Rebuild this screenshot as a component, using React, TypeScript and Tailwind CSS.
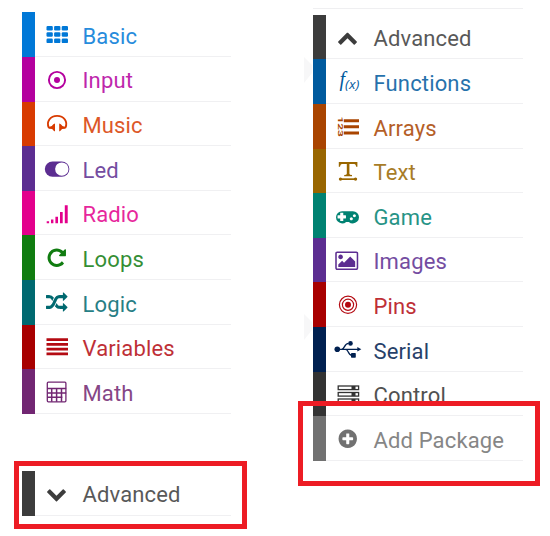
import React from 'react';

interface IconProps {
  children: React.ReactNode;
  viewBox?: string;
  className?: string;
}

const Icon = ({ children, viewBox = '0 0 24 24', className = 'w-6 h-6' }: IconProps) => (
  <svg className={`${className} shrink-0 overflow-visible`} viewBox={viewBox} fill="currentColor" aria-hidden="true">
    {children}
  </svg>
);

const GridIcon = () => (
  <Icon>
    {[2.900, 9.200, 15.500].map(y =>
      [1.5, 9.1, 16.7].map(x => <rect key={`${x}-${y}`} x={x} y={y} width="6.3" height="4.6" rx="1.2" />)
    )}
  </Icon>
);

const DotCircleIcon = () => (
  <Icon>
    <circle cx="12" cy="12" r="8.1" fill="none" stroke="currentColor" strokeWidth="1.9" />
    <circle cx="12" cy="12" r="3" />
  </Icon>
);

const HeadphonesIcon = () => (
  <Icon>
    <path d="M3.900 15.800C.8 9.500 5.500 3.900 12.100 3.900s11.300 5.600 8.200 11.900" fill="none" stroke="currentColor" strokeWidth="1.900" />
    <path d="M3 15.200l3.800-1.300q1.500-2.400 3.200-2.500v8q-1.800-.3-2.800-2.300l-3.400-.4zM21.200 15.200l-3.800-1.300q-1.500-2.400-3.200-2.500v8q1.800-.3 2.800-2.300l3.400-.4z" />
  </Icon>
);

const ToggleIcon = () => (
  <Icon>
    <rect x="-.2" y="4.400" width="24.600" height="15.400" rx="7.700" />
    <circle cx="16.800" cy="12.100" r="6.700" fill="white" />
  </Icon>
);

const SignalIcon = () => (
  <Icon>
    <path d="M1.700 19.300h2.400v2h-2.400zM6 17.400h2.400v3.900h-2.400zM10.400 14.800h2.600v6.500h-2.600zM15 10h2.700v11.300h-2.700zM19.800 3.200h2.900v18.100h-2.900z" />
  </Icon>
);

const RepeatIcon = () => (
  <Icon viewBox="0 0 1792 1792" className="w-[21.500px] h-[21.500px]">
    <path d="M1664 256v448q0 26-19 45t-45 19h-448q-42 0-59-40-17-39 14-69l138-138q-148-137-349-137-104 0-198.5 40.5t-163.5 109.5-109.5 163.5-40.5 198.5 40.5 198.5 109.5 163.5 163.5 109.5 198.5 40.5q119 0 225-52t179-147q7-10 23-12 15 0 25 9l137 138q9 8 9.5 20.5t-7.500 22.500q-109 132-264 204.500t-327 72.500q-156 0-298-61t-245-164-164-245-61-298 61-298 164-245 245-164 298-61q147 0 284.500 55.500t244.500 156.500l130-129q29-31 70-14 39 17 39 59z" />
  </Icon>
);

const ShuffleIcon = () => (
  <Icon viewBox="0 0 1792 1792" className="w-[21.500px] h-[21.500px]">
    <path d="M666 481q-60 92-137 273-22-45-37-72.5t-40.5-63.5-51-56.5-63-35-81.5-14.5h-224q-14 0-23-9t-9-23v-192q0-14 9-23t23-9h224q250 0 410 225zm1126 799q0 14-9 23l-320 320q-9 9-23 9-13 0-22.5-9.5t-9.5-22.5v-192q-32 0-85 .5t-81 1-73-1-71-5-64-10.5-63-18.5-58-28.5-59-40-55-53.5-56-69.5q59-93 136-273 22 45 37 72.5t40.5 63.5 51 56.5 63 35 81.5 14.5h256v-192q0-14 9-23t23-9q12 0 24 10l319 319q9 9 9 23zm0-896q0 14-9 23l-320 320q-9 9-23 9-13 0-22.5-9.5t-9.5-22.5v-192h-256q-48 0-87 15t-69 45-51 61.5-45 77.5q-32 62-78 171-29 66-49.5 111t-54 105-64 100-74 83-90 68.5-106.5 42-128 16.5h-224q-14 0-23-9t-9-23v-192q0-14 9-23t23-9h224q48 0 87-15t69-45 51-61.5 45-77.5q32-62 78-171 29-66 49.5-111t54-105 64-100 74-83 90-68.5 106.5-42 128-16.5h256v-192q0-14 9-23t23-9q12 0 24 10l319 319q9 9 9 23z" />
  </Icon>
);

const LinesIcon = () => (
  <Icon>
    <path d="M1.500 3.300h21.500v2.800h-21.500zM1.500 8h21.500v2.800h-21.500zM1.500 12.700h21.500v2.800h-21.500zM1.500 17.400h21.500v2.800h-21.500z" />
  </Icon>
);

const CalculatorIcon = () => (
  <Icon>
    <rect x="2.300" y="2.200" width="18.600" height="19.600" rx="1" fill="none" stroke="currentColor" strokeWidth="1.300" />
    <path d="M2 8.400h19.200M2 12.900h19.200M2 17.300h15.500M6.700 8.200v13.600M11.600 8.200v13.600M16.500 8.200v13.600" fill="none" stroke="currentColor" strokeWidth="1.500" />
  </Icon>
);

const ChevronDownIcon = () => (
  <Icon viewBox="0 0 1792 1792" className="w-[21px] h-[21px]">
    <path d="M1683 808l-742 741q-19 19-45 19t-45-19l-742-741q-19-19-19-45.5t19-45.5l166-165q19-19 45-19t45 19l531 531 531-531q19-19 45-19t45 19l166 165q19 19 19 45.5t-19 45.5z" />
  </Icon>
);

const ChevronUpIcon = () => (
  <Icon viewBox="0 0 1792 1792" className="w-[21px] h-[21px]">
    <path d="M1683 1331l-166 165q-19 19-45 19t-45-19l-531-531-531 531q-19 19-45 19t-45-19l-166-165q-19-19-19-45.5t19-45.5l742-741q19-19 45-19t45 19l742 741q19 19 19 45.5t-19 45.5z" />
  </Icon>
);

const FunctionIcon = () => (
  <Icon>
    <text x="3.400" y="16" fontFamily="Liberation Serif, serif" fontStyle="italic" fontSize="20">f</text>
    <text x="9" y="18.600" fontFamily="Open Sans, sans-serif" fontStyle="italic" fontSize="13.500" textLength="14.300" lengthAdjust="spacingAndGlyphs">(x)</text>
  </Icon>
);

const OrderedListIcon = () => (
  <Icon>
    <path d="M7.800 4.200h15.200v3h-15.200zM7.800 10.300h15.200v3h-15.200zM7.800 16.400h15.200v3h-15.200z" />
    {/* Numbers run down the left edge */}
    <text
      transform="translate(1.500 1.400) rotate(90)"
      fontFamily="Roboto, sans-serif"
      fontWeight="700"
      fontSize="7.500"
      textLength="20.500"
      lengthAdjust="spacingAndGlyphs"
    >
      123
    </text>
  </Icon>
);

const TextWidthIcon = () => (
  <Icon>
    <path d="M2.800 2.900h18.600v4.800h-1.200q-.3-2.800-1.800-2.800h-5v9.900q0 1.200 2.600 1.200v1.200h-7.800v-1.200q2.600 0 2.600-1.200v-9.900h-5q-1.500 0-1.800 2.800h-1.200z" />
    <path d="M4 19.300h16v1.700h-16z" />
    <circle cx="4.500" cy="20.100" r="1.700" />
    <circle cx="19.500" cy="20.100" r="1.700" />
  </Icon>
);

const GamepadIcon = () => (
  <Icon viewBox="0 0 1920 1792" className="w-[23px] h-[21.500px]">
    <path d="M832 1088v-192q0-14-9-23t-23-9h-192v-192q0-14-9-23t-23-9h-192q-14 0-23 9t-9 23v192h-192q-14 0-23 9t-9 23v192q0 14 9 23t23 9h192v192q0 14 9 23t23 9h192q14 0 23-9t9-23v-192h192q14 0 23-9t9-23zm576 64q0-53-37.5-90.5t-90.5-37.5-90.5 37.5-37.5 90.5 37.5 90.5 90.5 37.5 90.5-37.5 37.5-90.5zm256-256q0-53-37.5-90.5t-90.5-37.5-90.5 37.5-37.5 90.5 37.5 90.5 90.5 37.5 90.5-37.5 37.5-90.5zm256 128q0 212-150 362t-362 150q-192 0-338-128h-220q-146 128-338 128-212 0-362-150t-150-362 150-362 362-150h896q212 0 362 150t150 362z" />
  </Icon>
);

const ImageIcon = () => (
  <Icon viewBox="0 0 1920 1792" className="w-[23px] h-[21.500px]">
    <path d="M576 576q0 80-56 136t-136 56-136-56-56-136 56-136 136-56 136 56 56 136zm1024 384v448h-1408v-192l320-320 160 160 512-512zm96-704h-1600q-13 0-22.5 9.5t-9.5 22.5v1216q0 13 9.5 22.5t22.5 9.5h1600q13 0 22.5-9.5t9.5-22.5v-1216q0-13-9.5-22.5t-22.5-9.5zm160 32v1216q0 66-47 113t-113 47h-1600q-66 0-113-47t-47-113v-1216q0-66 47-113t113-47h1600q66 0 113 47t47 113z" />
  </Icon>
);

const TargetIcon = () => (
  <Icon>
    <g fill="none" stroke="currentColor" strokeWidth="1.200">
      <circle cx="12" cy="11.800" r="8.600" />
      <circle cx="12" cy="11.800" r="5.600" />
    </g>
    <circle cx="12" cy="11.800" r="3" />
  </Icon>
);

const UsbIcon = () => (
  <Icon>
    <circle cx="1.300" cy="11.300" r="2.800" />
    <path d="M21.300 9.100l4 2.200-4 2.200z" />
    <path d="M1 11.300h21M5.500 11.300C9 11.300 8 5.400 12.500 5.400M9.500 11.300C13 11.300 11.500 17.200 16 17.200" fill="none" stroke="currentColor" strokeWidth="1.300" />
    <circle cx="14.500" cy="5.400" r="2.300" />
    <rect x="15" y="15" width="4.800" height="4.800" rx=".8" />
  </Icon>
);

const ServerIcon = () => (
  <Icon>
    {[3, 9.500, 16].map(y => (
      <g key={y}>
        <rect x="2.200" y={y} width="20.400" height="3.600" fill="none" stroke="currentColor" strokeWidth="1.300" />
        <rect x="15.500" y={y} width="4" height="3.600" />
      </g>
    ))}
  </Icon>
);

const PlusCircleIcon = () => (
  <Icon viewBox="0 0 1792 1792" className="w-[21.500px] h-[21.500px]">
    <path d="M1344 960v-128q0-26-19-45t-45-19h-256v-256q0-26-19-45t-45-19h-128q-26 0-45 19t-19 45v256h-256q-26 0-45 19t-19 45v128q0 26 19 45t45 19h256v256q0 26 19 45t45 19h128q26 0 45-19t19-45v-256h256q26 0 45-19t19-45zm320-64q0 209-103 385.5t-279.5 279.5-385.5 103-385.5-103-279.5-279.5-103-385.5 103-385.5 279.5-279.5 385.5-103 385.5 103 279.5 279.5 103 385.5z" />
  </Icon>
);

interface Category {
  name: string;
  bar: string;
  text: string;
  icon: React.FC;
}

const basicCategories: Category[] = [
  { name: 'Basic', bar: 'bg-[#0078d7]', text: 'text-[#0078d7]', icon: GridIcon },
  { name: 'Input', bar: 'bg-[#b4009e]', text: 'text-[#b4009e]', icon: DotCircleIcon },
  { name: 'Music', bar: 'bg-[#d83b01]', text: 'text-[#d83b01]', icon: HeadphonesIcon },
  { name: 'Led', bar: 'bg-[#5c2d91]', text: 'text-[#5c2d91]', icon: ToggleIcon },
  { name: 'Radio', bar: 'bg-[#e3008c]', text: 'text-[#e3008c]', icon: SignalIcon },
  { name: 'Loops', bar: 'bg-[#107c10]', text: 'text-[#107c10]', icon: RepeatIcon },
  { name: 'Logic', bar: 'bg-[#006970]', text: 'text-[#006970]', icon: ShuffleIcon },
  { name: 'Variables', bar: 'bg-[#a80000]', text: 'text-[#b40a12]', icon: LinesIcon },
  { name: 'Math', bar: 'bg-[#712672]', text: 'text-[#712672]', icon: CalculatorIcon },
];

const collapsed: Category = { name: 'Advanced', bar: 'bg-[#3c3c3c]', text: 'text-[#3c3c3c]', icon: ChevronDownIcon };

const advancedCategories: Category[] = [
  { name: 'Advanced', bar: 'bg-[#3c3c3c]', text: 'text-[#3c3c3c]', icon: ChevronUpIcon },
  { name: 'Functions', bar: 'bg-[#005a9e]', text: 'text-[#005a9e]', icon: FunctionIcon },
  { name: 'Arrays', bar: 'bg-[#a94400]', text: 'text-[#a94400]', icon: OrderedListIcon },
  { name: 'Text', bar: 'bg-[#996600]', text: 'text-[#996600]', icon: TextWidthIcon },
  { name: 'Game', bar: 'bg-[#008272]', text: 'text-[#008272]', icon: GamepadIcon },
  { name: 'Images', bar: 'bg-[#5c2d91]', text: 'text-[#5c2d91]', icon: ImageIcon },
  { name: 'Pins', bar: 'bg-[#a80000]', text: 'text-[#b40a12]', icon: TargetIcon },
  { name: 'Serial', bar: 'bg-[#002050]', text: 'text-[#002050]', icon: UsbIcon },
  { name: 'Control', bar: 'bg-[#333333]', text: 'text-[#333333]', icon: ServerIcon },
  { name: 'Add Package', bar: 'bg-[#717171]', text: 'text-[#717171]', icon: PlusCircleIcon },
];

const CategoryRow = ({ category }: { category: Category }) => {
  const CategoryIcon = category.icon;
  return (
    <li className={`flex h-[44.640px] ${category.text}`}>
      <span className={`w-[13.300px] shrink-0 ${category.bar}`} />
      <div className="flex flex-1 items-center border-b border-[#f0f0f2] pl-[10px]">
        <span className="flex w-6 justify-center pt-[2px]">
          <CategoryIcon />
        </span>
        <span className="pl-[13.500px] pt-[5.500px] text-[22px] leading-6 tracking-[0.150px] whitespace-nowrap opacity-85">{category.name}</span>
      </div>
    </li>
  );
};

const App = () => (
  <div className="relative flex h-[536px] w-[550px] overflow-hidden bg-white font-['Roboto',sans-serif]">
    <div className="ml-[21.700px] w-[209px] pt-[12.300px]">
      <ul>
        {basicCategories.map(c => <CategoryRow key={c.name} category={c} />)}
      </ul>
      <ul className="mt-[57px]">
        <CategoryRow category={collapsed} />
      </ul>
    </div>

    <div className="ml-[82px] w-[210px]">
      <div className="h-[8.700px] border-b border-[#efeff1]" />
      <ul className="pt-[6px]">
        {advancedCategories.map(c => <CategoryRow key={c.name} category={c} />)}
      </ul>
    </div>

    {/* Faint arrows peeking out from under the flyout */}
    <svg className="absolute left-[304px] top-[57px] h-[26px] w-2" viewBox="0 0 8 26" fill="#f7f7f8" aria-hidden="true">
      <path d="M0 0l8 8v8l-8 10z" />
    </svg>
    <svg className="absolute left-[304px] top-[314px] h-[26px] w-2" viewBox="0 0 8 26" fill="#f7f7f8" aria-hidden="true">
      <path d="M0 0l8 8v8l-8 10z" />
    </svg>

    {/* Highlight frames */}
    <div className="absolute left-[14px] top-[461px] h-[68px] w-[233px] border-[5.500px] border-[#ed1c24]" />
    <div className="absolute left-[298px] top-[401px] h-[85px] w-[242px] border-[5.500px] border-[#ed1c24]" />
  </div>
);

export default App;
